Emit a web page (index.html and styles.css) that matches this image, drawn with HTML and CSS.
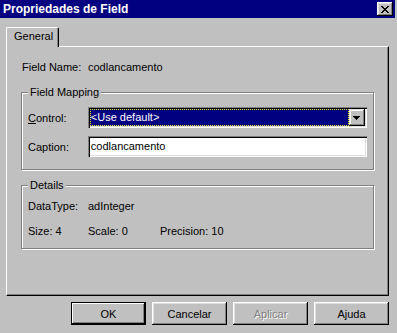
FILE: index.html
```html
<!DOCTYPE html>
<html lang="pt">
<head>
<meta charset="utf-8">
<title>Propriedades de Field</title>
<link rel="stylesheet" href="styles.css">
</head>
<body>
<div class="window">
  <div class="titlebar">
    <span class="title">Propriedades de Field</span>
    <button class="close" type="button" aria-label="Fechar">
      <svg width="8" height="7" viewBox="0 0 8 7" shape-rendering="crispEdges">
        <path d="M0 0h2v1h-2zM6 0h2v1h-2zM1 1h2v1h-2zM5 1h2v1h-2zM2 2h4v1h-4zM3 3h2v1h-2zM2 4h4v1h-4zM1 5h2v1h-2zM5 5h2v1h-2zM0 6h2v1h-2zM6 6h2v1h-2z" fill="#000"/>
      </svg>
    </button>
  </div>
  <div class="content">
    <div class="tabs"><div class="tab">General</div></div>
    <div class="panel">
      <div class="field-name"><span class="fn-label">Field Name:</span><span>codlancamento</span></div>
      <fieldset class="group mapping">
        <legend>Field Mapping</legend>
        <div class="form-row">
          <label class="form-label"><u>C</u>ontrol:</label>
          <div class="combo">
            <div class="combo-value">&lt;Use default&gt;</div>
            <div class="combo-btn">
              <svg width="7" height="4" viewBox="0 0 7 4" shape-rendering="crispEdges"><path d="M0 0h7v1h-7zM1 1h5v1h-5zM2 2h3v1h-3zM3 3h1v1h-1z" fill="#000"/></svg>
            </div>
          </div>
        </div>
        <div class="form-row">
          <label class="form-label">Caption:</label>
          <div class="textbox">codlancamento</div>
        </div>
      </fieldset>
      <fieldset class="group details">
        <legend>Details</legend>
        <div class="detail-row"><span class="d-col1">DataType:</span><span>adInteger</span></div>
        <div class="detail-row"><span class="d-col1">Size: 4</span><span class="d-col2">Scale: 0</span><span>Precision: 10</span></div>
      </fieldset>
    </div>
    <div class="buttons">
      <button class="btn default" type="button">OK</button>
      <button class="btn" type="button">Cancelar</button>
      <button class="btn disabled" type="button">Aplicar</button>
      <button class="btn" type="button">Ajuda</button>
    </div>
  </div>
</div>
</body>
</html>
```
FILE: styles.css
```css
* { box-sizing: border-box; }
body {
  margin: 0;
  background: #c0c0c0;
  font-family: "Liberation Sans", Arial, sans-serif;
  font-size: 11px;
  color: #000;
}
.window {
  width: 397px;
  height: 333px;
  background: #c0c0c0;
}
.titlebar {
  height: 18px;
  margin-right: 2px;
  background: #000080;
  display: flex;
  align-items: center;
  justify-content: space-between;
  padding: 0 2px 0 3px;
}
.title {
  color: #fff;
  font-weight: bold;
  font-size: 12px;
  line-height: 18px;
}
.close {
  width: 16px;
  height: 14px;
  padding: 0;
  border: 0;
  background: #c0c0c0;
  box-shadow: inset -1px -1px 0 #000, inset 1px 1px 0 #fff, inset -2px -2px 0 #808080, inset 2px 2px 0 #dfdfdf;
  display: flex;
  align-items: center;
  justify-content: center;
}
.close svg { display: block; }
.content {
  padding: 9px 0 0 6px;
  width: 389px;
}
.tabs { display: flex; }
.tab {
  position: relative;
  z-index: 1;
  width: 53px;
  height: 20px;
  margin-bottom: -1px;
  padding: 2px 0 0 7px;
  background: #c0c0c0;
  border-top: 1px solid #fff;
  border-left: 1px solid #fff;
  border-right: 1px solid #000;
  border-radius: 2px 2px 0 0;
  box-shadow: inset -1px 0 0 #808080;
  line-height: 13px;
}
.panel {
  height: 250px;
  border: 1px solid;
  border-color: #fff #000 #000 #fff;
  box-shadow: inset -1px -1px 0 #808080;
  padding: 14px 14px 0 14px;
}
.field-name {
  display: flex;
  margin-left: 1px;
  line-height: 13px;
}
.fn-label { width: 66px; }
.group {
  margin: 12px 0 0;
  padding: 8px 6px 12px;
  border: 1px solid #808080;
  box-shadow: 1px 1px 0 #fff, inset 1px 1px 0 #fff;
  min-width: 0;
}
.group legend {
  padding: 0 2px;
  line-height: 13px;
  background: #c0c0c0;
}
.details {
  margin-top: 9px;
  padding-bottom: 10px;
}
.form-row {
  display: flex;
  align-items: center;
  height: 21px;
}
.form-row + .form-row { margin-top: 8px; }
.form-label { width: 60px; }
.combo {
  width: 280px;
  height: 21px;
  padding: 2px;
  display: flex;
  background: #fff;
  box-shadow: inset 1px 1px 0 #808080, inset 2px 2px 0 #000, inset -1px -1px 0 #fff, inset -2px -2px 0 #dfdfdf;
}
.combo-value {
  flex: 1;
  background: #000080;
  color: #fff;
  border: 1px dotted #ffff00;
  padding-left: 0;
  line-height: 15px;
}
.combo-btn {
  width: 16px;
  height: 17px;
  background: #c0c0c0;
  box-shadow: inset -1px -1px 0 #000, inset 1px 1px 0 #dfdfdf, inset -2px -2px 0 #808080, inset 2px 2px 0 #fff;
  display: flex;
  align-items: center;
  justify-content: center;
}
.combo-btn svg { display: block; margin-left: -1px; }
.textbox {
  width: 280px;
  height: 21px;
  padding: 2px 3px;
  line-height: 17px;
  background: #fff;
  box-shadow: inset 1px 1px 0 #808080, inset 2px 2px 0 #000, inset -1px -1px 0 #fff, inset -2px -2px 0 #dfdfdf;
}
.detail-row {
  display: flex;
  line-height: 13px;
}
.detail-row + .detail-row { margin-top: 12px; }
.d-col1 { width: 60px; }
.d-col2 { width: 72px; }
.buttons {
  display: flex;
  justify-content: flex-end;
  gap: 6px;
  margin-top: 6px;
  width: 383px;
}
.btn {
  width: 75px;
  height: 23px;
  padding: 0;
  border: 0;
  background: #c0c0c0;
  font: inherit;
  color: #000;
  box-shadow: inset -1px -1px 0 #000, inset 1px 1px 0 #fff, inset -2px -2px 0 #808080, inset 2px 2px 0 #dfdfdf;
}
.btn.default {
  border: 1px solid #000;
  box-shadow: inset -1px -1px 0 #000, inset 1px 1px 0 #fff, inset -2px -2px 0 #808080;
}
.btn.disabled {
  color: #808080;
  text-shadow: 1px 1px 0 #fff;
}
```
